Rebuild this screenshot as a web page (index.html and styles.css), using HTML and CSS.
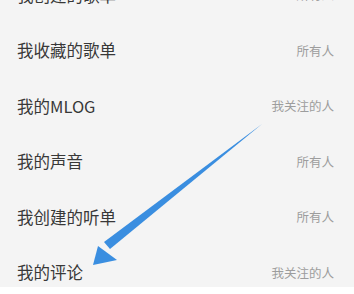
FILE: index.html
```html
<!DOCTYPE html>
<html lang="zh">
<head>
    <meta charset="UTF-8">
    <meta name="viewport" content="width=device-width, initial-scale=1.0">
    <title>隐私设置</title>
    <link rel="stylesheet" href="styles.css">
</head>
<body>
    <div class="privacy-list">
        <div class="row"><span class="name">我创建的歌单</span><span class="who">所有人</span></div>
        <div class="row"><span class="name">我收藏的歌单</span><span class="who">所有人</span></div>
        <div class="row"><span class="name">我的MLOG</span><span class="who">我关注的人</span></div>
        <div class="row"><span class="name">我的声音</span><span class="who">所有人</span></div>
        <div class="row"><span class="name">我创建的听单</span><span class="who">所有人</span></div>
        <div class="row"><span class="name">我的评论</span><span class="who">我关注的人</span></div>
    </div>

    <svg class="arrow" width="354" height="294" viewBox="0 0 354 294">
        <path d="M262 124 L110 249 L104 242 Z" fill="#3a8ee0"/>
        <path d="M93 265 L98 246 L117 260 Z" fill="#3a8ee0"/>
    </svg>
</body>
</html>
```

FILE: styles.css
```css
body {
    margin: 0;
    font-family: "Noto Sans CJK SC", "Noto Sans", sans-serif;
    background-color: #fff;
    width: 354px;
    height: 294px;
    overflow: hidden;
    position: relative;
}

.privacy-list {
    background-color: #f4f4f4;
    height: 287px;
    overflow: hidden;
}

.row {
    display: flex;
    justify-content: space-between;
    align-items: center;
    height: 55.5px;
    padding: 0 20px 0 17px;
}

.row:first-child {
    margin-top: -33px;
}

.name {
    font-size: 16.5px;
    color: #383838;
}

.who {
    font-size: 12.5px;
    color: #9d9d9d;
}

.arrow {
    position: absolute;
    left: 0;
    top: 0;
}
```
